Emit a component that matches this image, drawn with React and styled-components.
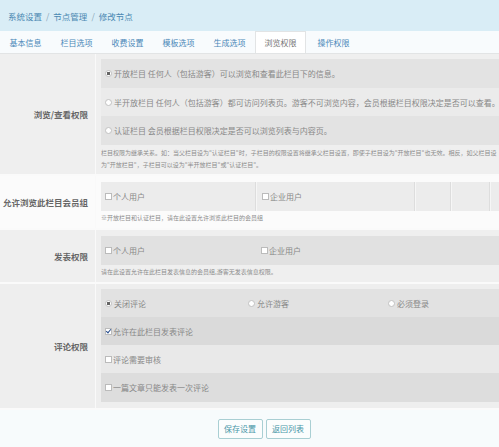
import styled, { createGlobalStyle } from 'styled-components';

const GlobalStyle = createGlobalStyle`
    body {
        margin: 0;
        background: #f4f6f7;
        font-family: "Noto Sans CJK SC", "Noto Sans", sans-serif;
    }
`;

const Page = styled.div`
    width: 100%;
    overflow: hidden;
`;

const Crumbs = styled.div`
    height: 31px;
    display: flex;
    align-items: center;
    padding-left: 8px;
    background: #d9edf6;
    font-size: 8.5px;
    color: #4a88b2;
    gap: 4px;
`;

const Sep = styled.span`
    color: #8aa6b8;
`;

const TabBar = styled.div`
    height: 22px;
    display: flex;
    align-items: flex-end;
    background: #f8fbfd;
    border-bottom: 1px solid #e2e4e5;
`;

const Tab = styled.div`
    height: 21px;
    padding: 0 8.5px;
    display: flex;
    align-items: center;
    font-size: 8px;
    color: ${(p) => (p.$active ? '#777' : '#4a88b8')};
    background: ${(p) => (p.$active ? '#fff' : 'transparent')};
    border: 1px solid ${(p) => (p.$active ? '#e2e4e5' : 'transparent')};
    border-bottom: none;
    margin: ${(p) => (p.$active ? '0 2px 0 0' : '0')};
`;

const Section = styled.div`
    display: grid;
    grid-template-columns: 96px 1fr;
    background: ${(p) => p.$bg};
    border-bottom: 2px solid #fafafa;
`;

const Label = styled.div`
    display: flex;
    align-items: center;
    justify-content: flex-end;
    padding-right: 7px;
    font-size: 8.5px;
    font-weight: bold;
    color: #666;
    border-right: 1px solid #f9f9f9;
`;

const Body = styled.div`
    padding: ${(p) => p.$pad || '5px 0 3px 5px'};
    min-width: 0;
`;

const Row = styled.div`
    height: ${(p) => p.$h || 28}px;
    display: flex;
    align-items: center;
    background: ${(p) => p.$bg};
    padding-left: 4px;
    font-size: 8px;
    color: #888;
    white-space: nowrap;
    overflow: hidden;
`;

const Cell = styled.div`
    height: 100%;
    width: ${(p) => p.$w}px;
    flex-shrink: 0;
    display: flex;
    align-items: center;
    border-right: ${(p) => (p.$line ? '1px solid #dddddd' : 'none')};
    box-shadow: ${(p) => (p.$line ? '1px 0 0 #f6f6f6' : 'none')};
    padding-left: ${(p) => p.$pl || 0}px;
`;

const RadioMark = styled.span`
    width: 5px;
    height: 5px;
    border-radius: 50%;
    border: 1px solid #c2c2c2;
    background: ${(p) => (p.$on ? 'radial-gradient(circle, #666 0 1.6px, #fff 2px)' : '#fff')};
    margin-right: 2px;
    flex-shrink: 0;
`;

const CheckMark = styled.span`
    width: 5px;
    height: 5px;
    border: 1px solid #bbb;
    background: #fff;
    margin-right: 1px;
    flex-shrink: 0;
    position: relative;
    &::after {
        content: '';
        display: ${(p) => (p.$on ? 'block' : 'none')};
        position: absolute;
        left: 1px;
        top: -1px;
        width: 2px;
        height: 4px;
        border: solid #2a4f8f;
        border-width: 0 1.5px 1.5px 0;
        transform: rotate(40deg);
    }
`;

const Note = styled.div`
    font-size: 6px;
    line-height: 12px;
    color: #8c8c8c;
    white-space: nowrap;
    overflow: hidden;
    padding: ${(p) => p.$pad || '2px 0 0 0'};
`;

const Footer = styled.div`
    height: 37px;
    display: flex;
    justify-content: center;
    align-items: center;
    gap: 3px;
    background: #f7fbfc;
    padding-left: 29px;
`;

const Button = styled.button`
    height: 20px;
    width: 45px;
    padding: 0;
    font-family: inherit;
    font-size: 8px;
    color: #4a97a8;
    background: #fbfdfd;
    border: 1px solid #a9cfd3;
    border-radius: 2px;
`;

const tabs = ['基本信息', '栏目选项', '收费设置', '模板选项', '生成选项', '浏览权限', '操作权限'];

export default function App() {
    return (
        <Page>
            <GlobalStyle />
            <Crumbs>
                <span>系统设置</span>
                <Sep>/</Sep>
                <span>节点管理</span>
                <Sep>/</Sep>
                <span>修改节点</span>
            </Crumbs>
            <TabBar>
                {tabs.map((t) => (
                    <Tab key={t} $active={t === '浏览权限'}>
                        {t}
                    </Tab>
                ))}
            </TabBar>

            <Section $bg="#efefef">
                <Label>浏览/查看权限</Label>
                <Body>
                    <Row $bg="#e3e3e3" $h={29}>
                        <RadioMark $on />
                        开放栏目 任何人（包括游客）可以浏览和查看此栏目下的信息。
                    </Row>
                    <Row $bg="#ebebeb">
                        <RadioMark />
                        半开放栏目 任何人（包括游客）都可访问列表页。游客不可浏览内容，会员根据栏目权限决定是否可以查看。
                    </Row>
                    <Row $bg="#e3e3e3" $h={29}>
                        <RadioMark />
                        认证栏目 会员根据栏目权限决定是否可以浏览列表与内容页。
                    </Row>
                    <Note>
                        栏目权限为继承关系。如：当父栏目设为"认证栏目"时，子栏目的权限设置将继承父栏目设置，即使子栏目设为"开放栏目"也无效。相反，如父栏目设
                        <br />
                        为"开放栏目"，子栏目可以设为"半开放栏目"或"认证栏目"。
                    </Note>
                </Body>
            </Section>

            <Section $bg="#fbfbfb">
                <Label>允许浏览此栏目会员组</Label>
                <Body $pad="6px 0 4px 5px">
                    <Row $bg="#ececec" $h={29}>
                        <Cell $w={150} $line>
                            <CheckMark />
                            个人用户
                        </Cell>
                        <Cell $w={152} $line $pl={6}>
                            <CheckMark />
                            企业用户
                        </Cell>
                        <Cell $w={35} $line />
                        <Cell $w={38} $line />
                        <Cell $w={30} />
                    </Row>
                    <Note $pad="1px 0 0 0">※开放栏目和认证栏目，请在此设置允许浏览此栏目的会员组</Note>
                </Body>
            </Section>

            <Section $bg="#efefef">
                <Label>发表权限</Label>
                <Body $pad="6px 0 4px 5px">
                    <Row $bg="#e1e1e1" $h={29}>
                        <Cell $w={156}>
                            <CheckMark />
                            个人用户
                        </Cell>
                        <Cell $w={150}>
                            <CheckMark />
                            企业用户
                        </Cell>
                    </Row>
                    <Note $pad="1px 0 0 0">请在此设置允许在此栏目发表信息的会员组,游客无发表信息权限。</Note>
                </Body>
            </Section>

            <Section $bg="#eeeeee">
                <Label>评论权限</Label>
                <Body $pad="5px 0 6px 5px">
                    <Row $bg="#e2e2e2">
                        <Cell $w={143}>
                            <RadioMark $on />
                            关闭评论
                        </Cell>
                        <Cell $w={140}>
                            <RadioMark />
                            允许游客
                        </Cell>
                        <Cell $w={100}>
                            <RadioMark />
                            必须登录
                        </Cell>
                    </Row>
                    <Row $bg="#dadada">
                        <CheckMark $on />
                        允许在此栏目发表评论
                    </Row>
                    <Row $bg="#e9e9e9">
                        <CheckMark />
                        评论需要审核
                    </Row>
                    <Row $bg="#dddddd" $h={29}>
                        <CheckMark />
                        一篇文章只能发表一次评论
                    </Row>
                </Body>
            </Section>

            <Footer>
                <Button>保存设置</Button>
                <Button>返回列表</Button>
            </Footer>
        </Page>
    );
}
